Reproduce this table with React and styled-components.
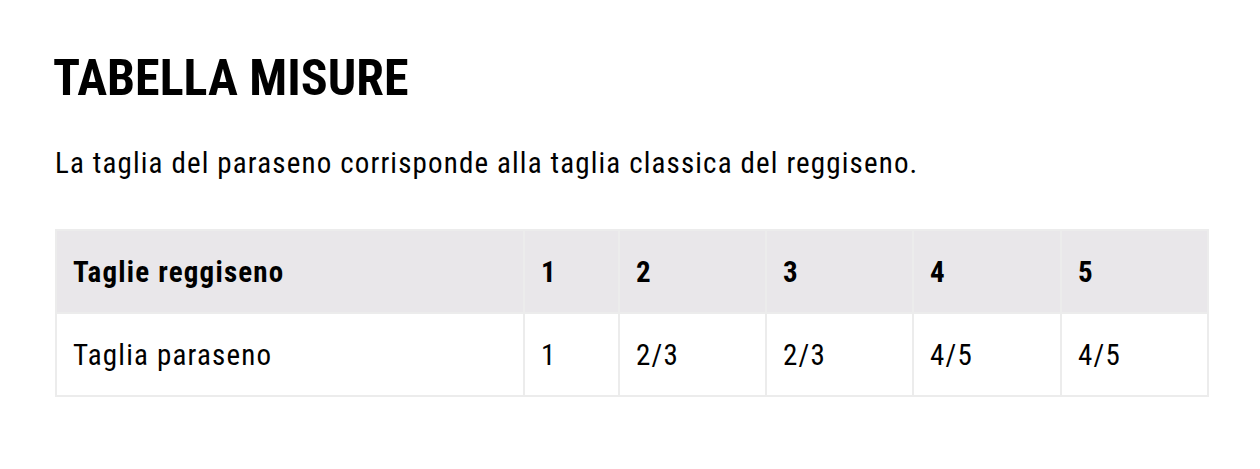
import React from "react";
import styled, { createGlobalStyle } from "styled-components";

const GlobalStyle = createGlobalStyle`
  body {
    margin: 0;
    background: #fff;
    font-family: "Roboto Condensed", "Roboto", "Liberation Sans", sans-serif;
    color: #000;
  }
`;

const Wrapper = styled.div`
  padding: 52px 53px 0 55px;
`;

const Title = styled.h2`
  margin: 0 0 0 -2px;
  font-size: 50px;
  font-weight: 700;
  line-height: 52px;
  text-transform: uppercase;
`;

const Intro = styled.p`
  margin: 41px 0 48px;
  font-size: 29px;
  letter-spacing: 1.15px;
  line-height: 36px;
  font-weight: 400;
`;

const Table = styled.table`
  width: 100%;
  border-collapse: collapse;
  table-layout: fixed;
  border: 2px solid #ececec;
`;

const Row = styled.tr`
  background: ${(p) => (p.$head ? "#e9e7ea" : "#fff")};
`;

const Cell = styled.td`
  height: 81px;
  padding: 0 16px;
  border: 2px solid #ececec;
  font-size: 29px;
  letter-spacing: 1.2px;
  font-weight: ${(p) => (p.$bold ? 700 : 400)};
  text-align: left;
  vertical-align: middle;
`;

const widths = ["468px", "95px", "147px", "147px", "148px", "147px"];

const head = ["Taglie reggiseno", "1", "2", "3", "4", "5"];
const body = ["Taglia paraseno", "1", "2/3", "2/3", "4/5", "4/5"];

export default function App() {
  return (
    <>
      <GlobalStyle />
      <Wrapper>
        <Title>Tabella misure</Title>
        <Intro>La taglia del paraseno corrisponde alla taglia classica del reggiseno.</Intro>
        <Table>
          <colgroup>
            {widths.map((w, i) => (
              <col key={i} style={{ width: w }} />
            ))}
          </colgroup>
          <tbody>
            <Row $head>
              {head.map((t, i) => (
                <Cell key={i} $bold>{t}</Cell>
              ))}
            </Row>
            <Row>
              {body.map((t, i) => (
                <Cell key={i}>{t}</Cell>
              ))}
            </Row>
          </tbody>
        </Table>
      </Wrapper>
    </>
  );
}
